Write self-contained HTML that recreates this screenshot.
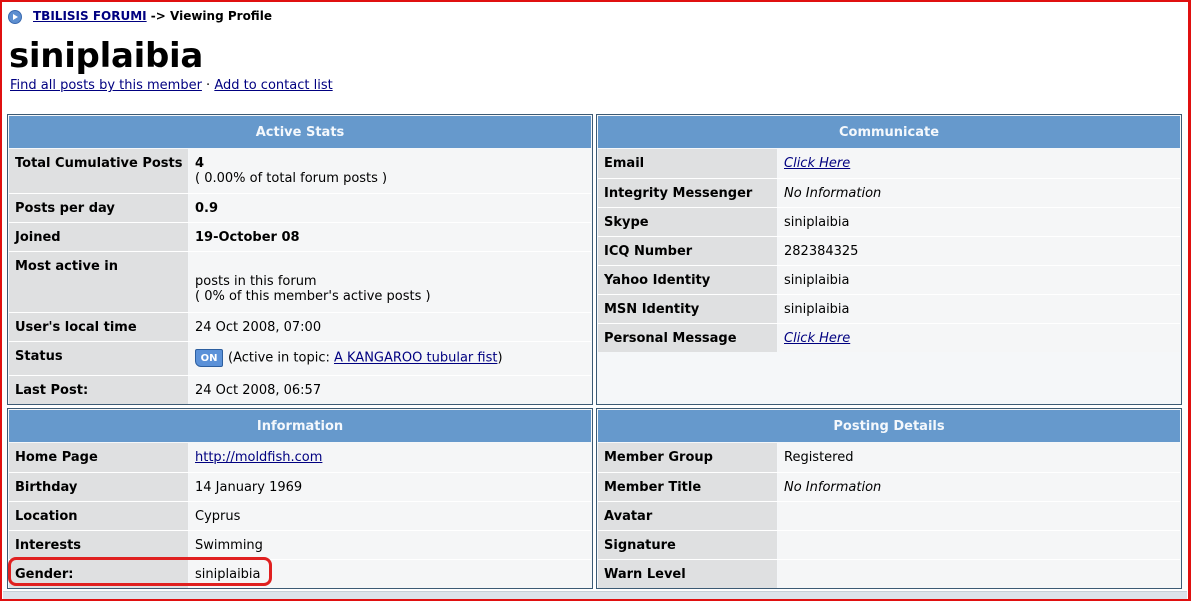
<!DOCTYPE html>
<html><head><meta charset="utf-8"><style>
*{margin:0;padding:0;box-sizing:border-box}
body{width:1191px;height:601px;background:#fff;position:relative;overflow:hidden;font-family:"DejaVu Sans","Liberation Sans",sans-serif;font-size:13px;color:#000}
.frame{position:absolute;left:0;top:0;width:1191px;height:601px;border:2px solid #e01010;border-right-width:3px;z-index:5;pointer-events:none}
a{color:#000080;text-decoration:underline}
.p{position:absolute;border:1px solid #3c5a74;background:#f5f7f9;padding:1px}
.h{position:absolute;left:1px;right:1px;top:1px;height:32px;background:#6699cc;color:#f4f8fc;font-weight:bold;text-align:center;line-height:33px}
.r{position:absolute;left:1px;right:1px}
.l{position:absolute;left:0;top:0;bottom:0;width:179px;background:#dfe0e1;font-weight:bold;padding:7px 0 0 6px}
.v{position:absolute;left:180px;right:0;top:0;bottom:0;background:#f5f6f7;padding:7px 0 0 6px}
.sep{border-top:1px solid #fff}
</style></head><body>
<div class="frame"></div>
<div style="position:absolute;left:8px;top:10px;width:14px;height:14px;border-radius:50%;background:#5d8fd0;border:1px solid #3a6ab0"></div>
<div style="position:absolute;left:13px;top:14px;width:0;height:0;border-left:5px solid #fff;border-top:3px solid transparent;border-bottom:3px solid transparent"></div>
<div style="position:absolute;left:33px;top:9px;font-size:12px;font-weight:bold"><a href="#">TBILISIS FORUMI</a> -&gt; Viewing Profile</div>
<div style="position:absolute;left:9px;top:36px;font-size:34px;font-weight:bold;letter-spacing:-0.3px">siniplaibia</div>
<div style="position:absolute;left:10px;top:78px"><a href="#">Find all posts by this member</a> · <a href="#">Add to contact list</a></div>

<div class="p" style="left:7px;top:114px;width:586px;height:291px">
<div class="h">Active Stats</div>
<div class="r" style="top:34px;height:44px"><div class="l">Total Cumulative Posts</div><div class="v"><b>4</b><br>( 0.00% of total forum posts )</div></div>
<div class="r sep" style="top:78px;height:29px"><div class="l">Posts per day</div><div class="v"><b>0.9</b></div></div>
<div class="r sep" style="top:107px;height:29px"><div class="l">Joined</div><div class="v"><b>19-October 08</b></div></div>
<div class="r sep" style="top:136px;height:61px"><div class="l">Most active in</div><div class="v"><br>posts in this forum<br>( 0% of this member's active posts )</div></div>
<div class="r sep" style="top:197px;height:29px"><div class="l">User's local time</div><div class="v">24 Oct 2008, 07:00</div></div>
<div class="r sep" style="top:226px;height:34px"><div class="l">Status</div><div class="v"><span style="display:inline-block;width:28px;height:18px;background:#5b91d8;border:1px solid #2d5fa0;border-radius:2px 2px 2px 6px;color:#fff;font-size:10px;font-weight:bold;text-align:center;line-height:17px;vertical-align:middle;margin-right:5px">ON</span>(Active in topic: <a href="#">A KANGAROO tubular fist</a>)</div></div>
<div class="r sep" style="top:260px;height:29px"><div class="l">Last Post:</div><div class="v">24 Oct 2008, 06:57</div></div>
</div>

<div class="p" style="left:596px;top:114px;width:586px;height:291px">
<div class="h">Communicate</div>
<div class="r" style="top:34px;height:29px"><div class="l">Email</div><div class="v"><i><a href="#">Click Here</a></i></div></div>
<div class="r sep" style="top:63px;height:29px"><div class="l">Integrity Messenger</div><div class="v"><i>No Information</i></div></div>
<div class="r sep" style="top:92px;height:29px"><div class="l">Skype</div><div class="v">siniplaibia</div></div>
<div class="r sep" style="top:121px;height:29px"><div class="l">ICQ Number</div><div class="v">282384325</div></div>
<div class="r sep" style="top:150px;height:29px"><div class="l">Yahoo Identity</div><div class="v">siniplaibia</div></div>
<div class="r sep" style="top:179px;height:29px"><div class="l">MSN Identity</div><div class="v">siniplaibia</div></div>
<div class="r sep" style="top:208px;height:29px"><div class="l">Personal Message</div><div class="v"><i><a href="#">Click Here</a></i></div></div>
</div>

<div class="p" style="left:7px;top:408px;width:586px;height:181px">
<div class="h">Information</div>
<div class="r" style="top:34px;height:29px"><div class="l">Home Page</div><div class="v"><a href="#">http://moldfish.com</a></div></div>
<div class="r sep" style="top:63px;height:29px"><div class="l">Birthday</div><div class="v">14 January 1969</div></div>
<div class="r sep" style="top:92px;height:29px"><div class="l">Location</div><div class="v">Cyprus</div></div>
<div class="r sep" style="top:121px;height:29px"><div class="l">Interests</div><div class="v">Swimming</div></div>
<div class="r sep" style="top:150px;height:29px"><div class="l">Gender:</div><div class="v">siniplaibia</div></div>
</div>
<div style="position:absolute;left:8px;top:557px;width:264px;height:29px;border:3px solid #e02020;border-radius:8px;z-index:4"></div>

<div class="p" style="left:596px;top:408px;width:586px;height:181px">
<div class="h">Posting Details</div>
<div class="r" style="top:34px;height:29px"><div class="l">Member Group</div><div class="v">Registered</div></div>
<div class="r sep" style="top:63px;height:29px"><div class="l">Member Title</div><div class="v"><i>No Information</i></div></div>
<div class="r sep" style="top:92px;height:29px"><div class="l">Avatar</div><div class="v"></div></div>
<div class="r sep" style="top:121px;height:29px"><div class="l">Signature</div><div class="v"></div></div>
<div class="r sep" style="top:150px;height:29px"><div class="l">Warn Level</div><div class="v"></div></div>
</div>
<div style="position:absolute;left:3px;top:591px;width:1184px;height:8px;background:#dde3ea;border-top:1px solid #c8d0d8"></div>
</body></html>
